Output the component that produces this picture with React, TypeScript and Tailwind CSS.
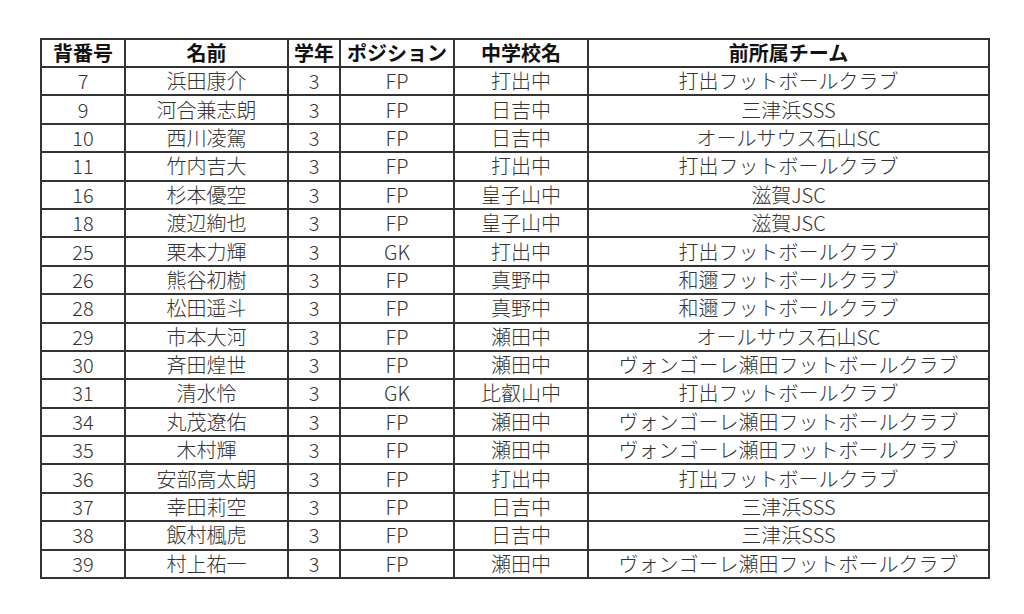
const rows: [string, string, string, string, string, string][] = [
  ["7", "浜田康介", "3", "FP", "打出中", "打出フットボールクラブ"],
  ["9", "河合兼志朗", "3", "FP", "日吉中", "三津浜SSS"],
  ["10", "西川凌駕", "3", "FP", "日吉中", "オールサウス石山SC"],
  ["11", "竹内吉大", "3", "FP", "打出中", "打出フットボールクラブ"],
  ["16", "杉本優空", "3", "FP", "皇子山中", "滋賀JSC"],
  ["18", "渡辺絢也", "3", "FP", "皇子山中", "滋賀JSC"],
  ["25", "栗本力輝", "3", "GK", "打出中", "打出フットボールクラブ"],
  ["26", "熊谷初樹", "3", "FP", "真野中", "和邇フットボールクラブ"],
  ["28", "松田遥斗", "3", "FP", "真野中", "和邇フットボールクラブ"],
  ["29", "市本大河", "3", "FP", "瀬田中", "オールサウス石山SC"],
  ["30", "斉田煌世", "3", "FP", "瀬田中", "ヴォンゴーレ瀬田フットボールクラブ"],
  ["31", "清水怜", "3", "GK", "比叡山中", "打出フットボールクラブ"],
  ["34", "丸茂遼佑", "3", "FP", "瀬田中", "ヴォンゴーレ瀬田フットボールクラブ"],
  ["35", "木村輝", "3", "FP", "瀬田中", "ヴォンゴーレ瀬田フットボールクラブ"],
  ["36", "安部高太朗", "3", "FP", "打出中", "打出フットボールクラブ"],
  ["37", "幸田莉空", "3", "FP", "日吉中", "三津浜SSS"],
  ["38", "飯村楓虎", "3", "FP", "日吉中", "三津浜SSS"],
  ["39", "村上祐一", "3", "FP", "瀬田中", "ヴォンゴーレ瀬田フットボールクラブ"],
]

const headers = ["背番号", "名前", "学年", "ポジション", "中学校名", "前所属チーム"]

export default function App() {
  return (
    <div className="w-[1024px] h-[614px] bg-white pt-[38px] pl-[40px] font-['Noto_Sans_CJK_JP','Noto_Sans',sans-serif]">
      <table className="table-fixed border-collapse w-[948px] border-2 border-[#333]">
        <colgroup>
          <col className="w-[84px]" />
          <col className="w-[163px]" />
          <col className="w-[52px]" />
          <col className="w-[114px]" />
          <col className="w-[134px]" />
          <col className="w-[401px]" />
        </colgroup>
        <thead>
          <tr className="h-[28px]">
            {headers.map((h) => (
              <th
                key={h}
                className="border-2 border-[#333] p-0 text-center align-middle text-[20px] leading-none font-bold text-[#111]"
              >
                {h}
              </th>
            ))}
          </tr>
        </thead>
        <tbody>
          {rows.map((r) => (
            <tr key={r[0]} className="h-[28.4px]">
              {r.map((c, i) => (
                <td
                  key={i}
                  className="border-2 border-[#333] p-0 text-center align-middle text-[20px] leading-none font-light text-[#333]"
                >
                  {c}
                </td>
              ))}
            </tr>
          ))}
        </tbody>
      </table>
    </div>
  )
}
